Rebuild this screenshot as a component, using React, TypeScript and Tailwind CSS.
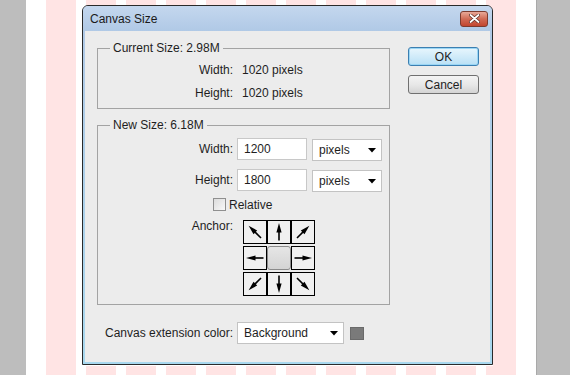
import React from "react";

function Arrow({ rot }: { rot: number }) {
  return (
    <svg width="22" height="22" viewBox="0 0 22 22">
      <g transform={`rotate(${rot} 11 11)`}>
        <line x1="11" y1="19.5" x2="11" y2="8" stroke="#000" strokeWidth="1.6" />
        <polygon points="11,2 8.4,11.5 13.6,11.5" fill="#000" />
      </g>
    </svg>
  );
}

function Dropdown({ label, w }: { label: string; w: string }) {
  return (
    <div
      className={`${w} h-[22px] bg-white border border-[#c3c3c3] flex items-center justify-between pl-[6px] pr-[5px]`}
    >
      <span>{label}</span>
      <svg width="8" height="5" viewBox="0 0 8 5">
        <polygon points="0,0 8,0 4,4.5" fill="#000" />
      </svg>
    </div>
  );
}

function Input({ value }: { value: string }) {
  return (
    <div className="w-[70px] h-[22px] bg-white border border-[#c8c8c8] flex items-center pl-[6px]">
      {value}
    </div>
  );
}

const arrows: (number | null)[] = [-45, 0, 45, -90, null, 90, -135, 180, 135];

export default function App() {
  return (
    <div className="relative h-[375px] w-[570px] overflow-hidden flex font-['Liberation_Sans',Arial,sans-serif] text-[12px] leading-[14px] text-[#1e1e1e]">
      <div className="w-[26px] bg-[#bdbdbd]" />
      <div className="w-[20px] bg-white" />
      <div className="flex gap-[10px] bg-white">
        {Array.from({ length: 12 }).map((_, i) => (
          <div key={i} className="w-[30px] bg-[#ffe4e4]" />
        ))}
      </div>
      <div className="w-[20px] bg-white" />
      <div className="w-[34px] bg-[#bdbdbd] border-l border-[#a9a9a9]" />

      {/* Dialog window */}
      <div className="absolute left-[82px] top-[5px] w-[411px] h-[360px] border border-[#2a2a2a] rounded-t-[6px] bg-[#b4cde9] flex flex-col shadow-[0_1px_0_#ffffff]">
        <div className="h-[25px] shrink-0 rounded-t-[5px] bg-gradient-to-b from-[#c4d7ee] to-[#b0c9e6] flex items-center justify-between pl-[7px] pr-[4px]">
          <span className="text-[#1a1a1a]">Canvas Size</span>
          <div className="w-[28px] h-[16px] rounded-[3px] border border-[#7d3b2f] bg-gradient-to-b from-[#e8a898] via-[#d06a55] to-[#c2452f] flex items-center justify-center">
            <svg width="11" height="9" viewBox="0 0 11 9">
              <path d="M1.5 1 L9.5 8 M9.5 1 L1.5 8" stroke="#5a2a22" strokeWidth="3.2" strokeLinecap="round" />
              <path d="M1.5 1 L9.5 8 M9.5 1 L1.5 8" stroke="#ffffff" strokeWidth="1.8" strokeLinecap="round" />
            </svg>
          </div>
        </div>
        <div className="flex-1 px-[2px] pb-[2px] bg-gradient-to-b from-[#b0c9e6] to-[#a8d8ee]">
          <div className="h-full bg-[#ececec] pl-[12px] pt-[10px] flex">
            {/* Left column */}
            <div className="w-[293px] flex flex-col">
              <fieldset className="border border-[#a3a3a3] h-[68px] m-0 p-0">
                <legend className="ml-[12px] px-[3px] leading-[14px]">Current Size: 2.98M</legend>
                <div className="grid grid-cols-[135px_auto] gap-x-[9px] pt-[3px]">
                  <div className="h-[23px] flex items-center justify-end">Width:</div>
                  <div className="h-[23px] flex items-center">1020 pixels</div>
                  <div className="h-[23px] flex items-center justify-end">Height:</div>
                  <div className="h-[23px] flex items-center">1020 pixels</div>
                </div>
              </fieldset>

              <fieldset className="border border-[#a3a3a3] h-[187px] mt-[9px] m-0 p-0">
                <legend className="ml-[12px] px-[3px] leading-[14px]">New Size: 6.18M</legend>
                <div className="flex flex-col pt-[6px]">
                  <div className="flex items-center h-[22px]">
                    <div className="w-[135px] text-right">Width:</div>
                    <div className="ml-[4px]">
                      <Input value="1200" />
                    </div>
                    <div className="ml-[5px] mt-[2px]">
                      <Dropdown label="pixels" w="w-[70px]" />
                    </div>
                  </div>
                  <div className="flex items-center h-[22px] mt-[9px]">
                    <div className="w-[135px] text-right">Height:</div>
                    <div className="ml-[4px]">
                      <Input value="1800" />
                    </div>
                    <div className="ml-[5px] mt-[2px]">
                      <Dropdown label="pixels" w="w-[70px]" />
                    </div>
                  </div>
                  <div className="flex items-center h-[13px] mt-[7px] pl-[115px]">
                    <div className="w-[13px] h-[13px] border border-[#8f8f8f] bg-gradient-to-br from-[#dcdcdc] to-[#f8f8f8]" />
                    <span className="ml-[3px]">Relative</span>
                  </div>
                  <div className="flex items-start mt-[9px]">
                    <div className="w-[135px] text-right -mt-[1px]">Anchor:</div>
                    <div className="ml-[10px] grid grid-cols-[24px_24px_24px] gap-y-[2px]">
                      {arrows.map((r, i) =>
                        r === null ? (
                          <div key={i} className="w-[24px] h-[24px] rounded-[3px] border border-[#8a8a8a] bg-gradient-to-b from-[#e6e6e6] to-[#d4d4d4]" />
                        ) : (
                          <div key={i} className="w-[24px] h-[24px] border border-black bg-[#f0f0f0] flex items-center justify-center">
                            <Arrow rot={r} />
                          </div>
                        )
                      )}
                    </div>
                  </div>
                </div>
              </fieldset>

              <div className="flex items-center mt-[17px] pl-[8px] h-[22px]">
                <span className="w-[132px]">Canvas extension color:</span>
                <Dropdown label="Background" w="w-[107px]" />
                <div className="ml-[6px] w-[14px] h-[13px] bg-[#7a7a7a] border border-[#6a6a6a]" />
              </div>
            </div>

            {/* Right column: buttons */}
            <div className="ml-[18px] w-[71px] flex flex-col gap-[9px] pt-[6px]">
              <div className="h-[19px] rounded-[3px] border border-[#3c7fb1] bg-gradient-to-b from-[#e8f6fd] to-[#b9e0f5] shadow-[inset_0_0_0_1px_#9ad6f5] flex items-center justify-center">
                OK
              </div>
              <div className="h-[19px] rounded-[3px] border border-[#707070] bg-gradient-to-b from-[#f4f4f4] via-[#e8e8e8] to-[#d4d4d4] flex items-center justify-center">
                Cancel
              </div>
            </div>
          </div>
        </div>
      </div>
    </div>
  );
}
